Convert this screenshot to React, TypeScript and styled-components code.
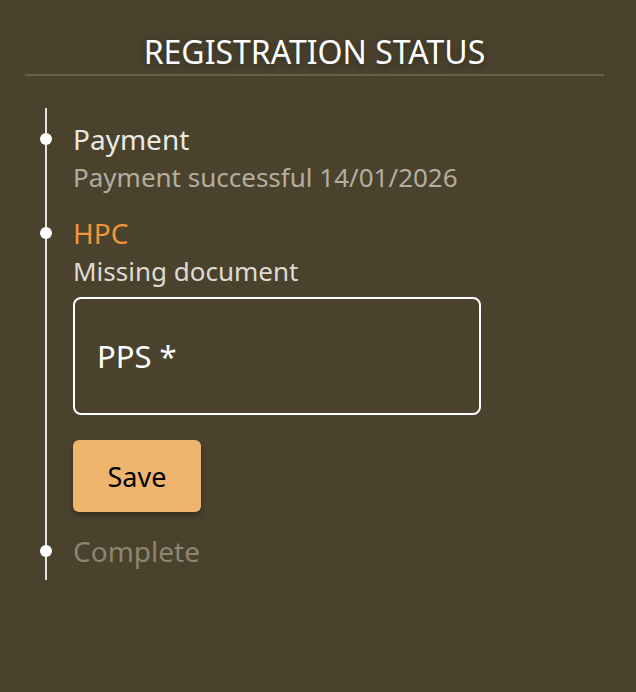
import React from 'react'
import styled, { createGlobalStyle } from 'styled-components'

const GlobalStyle = createGlobalStyle`
  html, body {
    margin: 0;
    padding: 0;
    background: #4a422d;
  }
  body {
    font-family: 'Noto Sans', 'Open Sans', sans-serif;
  }
`

const Page = styled.div`
  min-height: 692px;
  background: #4a422d;
  padding: 33px 32px 0 25px;
  box-sizing: border-box;
`

const Title = styled.h2`
  margin: 0;
  padding-bottom: 3px;
  text-align: center;
  color: #fff;
  font-size: 32px;
  font-weight: 400;
  line-height: 38px;
  border-bottom: 2px solid #686047;
  text-shadow: 0 2px 6px rgba(0, 0, 0, 0.35);
`

const Timeline = styled.div`
  margin: 32px 0 0 20px;
  border-left: 2px solid #e6e3dc;
  padding: 12px 0 10px 26px;
  display: flex;
  flex-direction: column;
  gap: 18px;
`

const Step = styled.div`
  position: relative;
  display: flex;
  flex-direction: column;
`

const Dot = styled.span`
  position: absolute;
  left: -33px;
  top: 13px;
  width: 12px;
  height: 12px;
  border-radius: 50%;
  background: #fff;
`

type LabelProps = { $tone: 'done' | 'active' | 'pending' }

const Label = styled.div<LabelProps>`
  font-size: 28px;
  line-height: 38px;
  color: ${({ $tone }) =>
    $tone === 'active' ? '#f0963a' : $tone === 'pending' ? '#8c846f' : '#ebe9e4'};
`

const Note = styled.div<{ $muted?: boolean }>`
  font-size: 26px;
  line-height: 38px;
  color: ${({ $muted }) => ($muted ? '#b3ad9f' : '#dedbd3')};
`

const Field = styled.div`
  margin-top: 7px;
  width: 408px;
  height: 118px;
  box-sizing: border-box;
  border: 2px solid #fff;
  border-radius: 8px;
  display: flex;
  align-items: center;
  padding: 0 0 0 22px;
  color: #fff;
  font-size: 31px;
`

const SaveButton = styled.button`
  margin: 25px 0 2px;
  width: 128px;
  height: 72px;
  border: none;
  border-radius: 6px;
  background: #efb46d;
  color: #000;
  font-family: 'Noto Sans', sans-serif;
  font-size: 27px;
  box-shadow: 0 3px 5px rgba(0, 0, 0, 0.3);
  align-self: flex-start;
  cursor: pointer;
`

export default function App() {
  return (
    <>
      <GlobalStyle />
      <Page>
        <Title>REGISTRATION STATUS</Title>
        <Timeline>
          <Step>
            <Dot />
            <Label $tone="done">Payment</Label>
            <Note $muted>Payment successful 14/01/2026</Note>
          </Step>
          <Step>
            <Dot />
            <Label $tone="active">HPC</Label>
            <Note>Missing document</Note>
            <Field>PPS *</Field>
            <SaveButton>Save</SaveButton>
          </Step>
          <Step>
            <Dot />
            <Label $tone="pending">Complete</Label>
          </Step>
        </Timeline>
      </Page>
    </>
  )
}
